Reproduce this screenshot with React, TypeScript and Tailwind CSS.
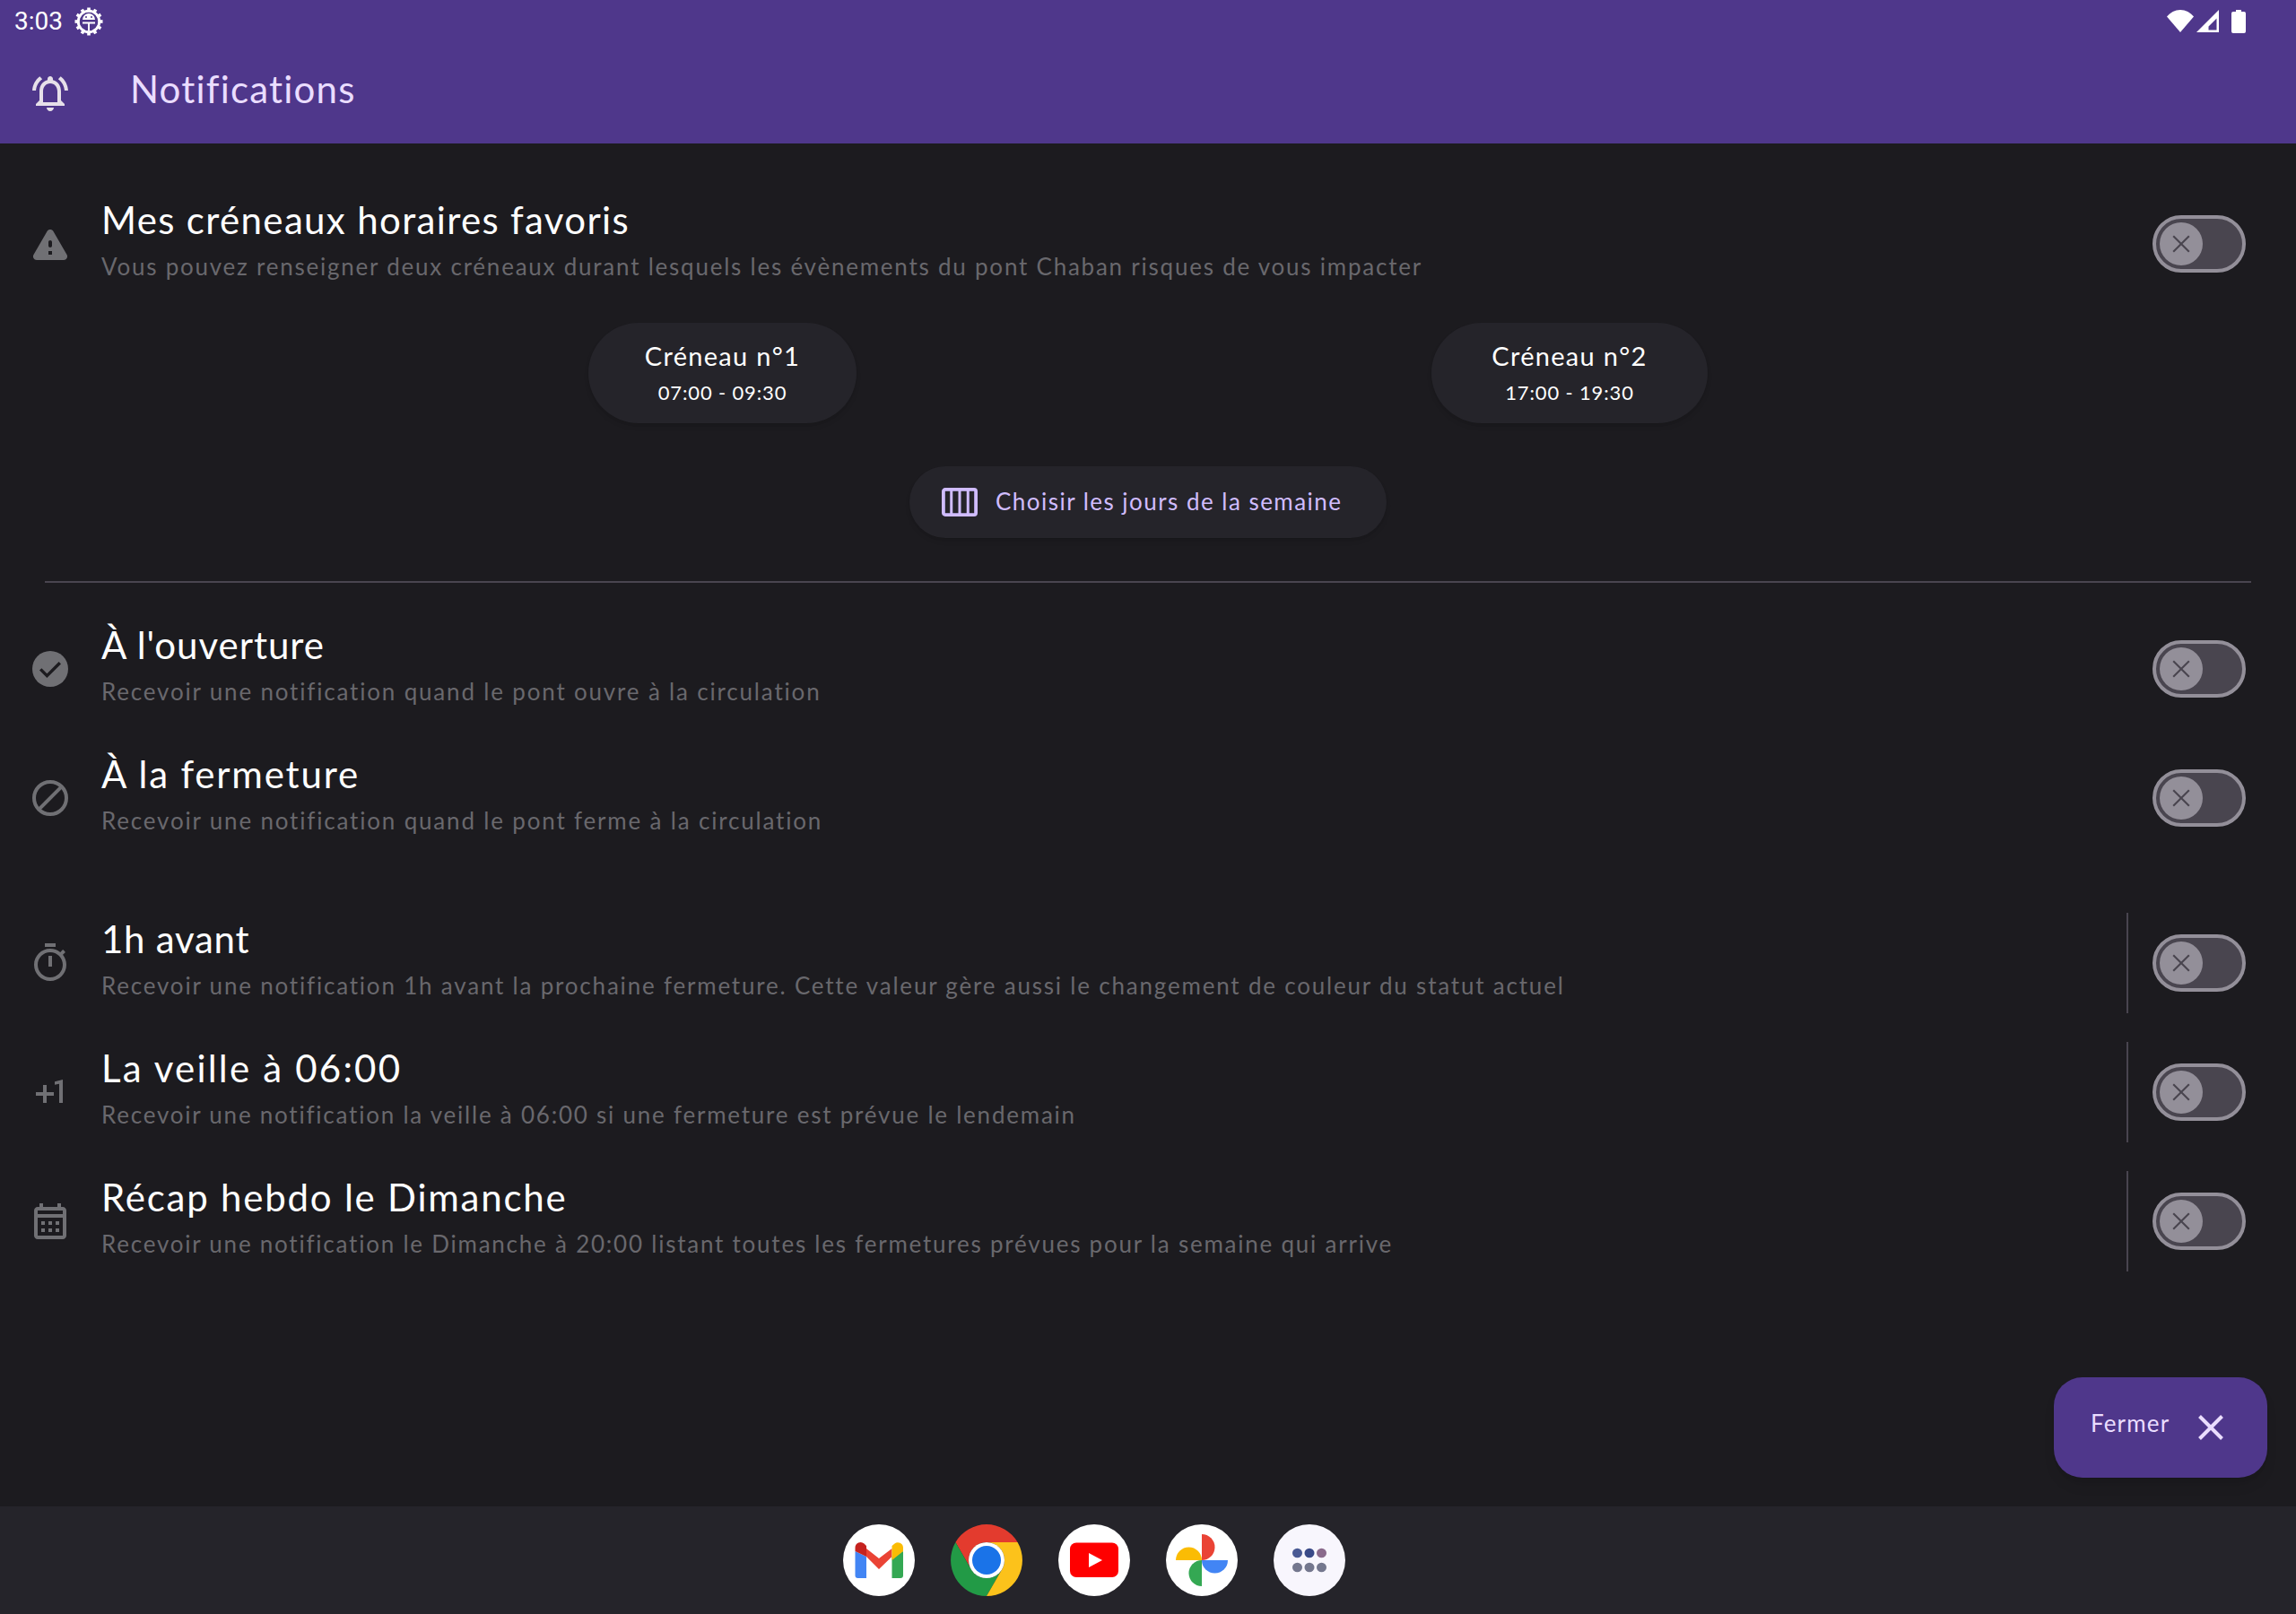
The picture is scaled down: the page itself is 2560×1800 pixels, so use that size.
import React from "react";

const G = "#707074";

function MI({ d, className = "" }: { d: string; className?: string }) {
  return (
    <svg viewBox="0 0 24 24" className={`w-12 h-12 shrink-0 ${className}`} fill="currentColor">
      <path d={d} />
    </svg>
  );
}

const warning = "M4.47 21h15.06c1.54 0 2.5-1.67 1.73-3L13.73 4.99c-.77-1.33-2.69-1.33-3.46 0L2.74 18c-.77 1.33.19 3 1.73 3zM12 14c-.55 0-1-.45-1-1v-2c0-.55.45-1 1-1s1 .45 1 1v2c0 .55-.45 1-1 1zm1 4h-2v-2h2v2z";
const timer = "M9 1h6v2H9zm10.03 6.39l1.42-1.42c-.43-.51-.9-.99-1.41-1.41l-1.42 1.42C16.07 4.74 14.12 4 12 4c-4.97 0-9 4.03-9 9s4.02 9 9 9 9-4.03 9-9c0-2.12-.74-4.07-1.97-5.61zM12 20c-3.87 0-7-3.13-7-7s3.13-7 7-7 7 3.13 7 7-3.13 7-7 7zm-1-12h2v6h-2z";
const plusOne = "M10 8H8v4H4v2h4v4h2v-4h4v-2h-4zm4.5-1.92V7.9l2.5-.5V18h2V5z";
const calendar = "M19 4h-1V2h-2v2H8V2H6v2H5c-1.11 0-1.99.9-1.99 2L3 20c0 1.1.89 2 2 2h14c1.1 0 2-.9 2-2V6c0-1.1-.9-2-2-2zm0 16H5V10h14v10zm0-12H5V6h14v2zM9 14H7v-2h2v2zm4 0h-2v-2h2v2zm4 0h-2v-2h2v2zm-8 4H7v-2h2v2zm4 0h-2v-2h2v2zm4 0h-2v-2h2v2z";
const bell = "M7.58 4.08L6.15 2.65C3.75 4.48 2.17 7.3 2.03 10.5h2c.15-2.65 1.51-4.97 3.55-6.42zm12.39 6.42h2c-.15-3.2-1.73-6.02-4.12-7.85l-1.42 1.43c2.02 1.45 3.39 3.77 3.54 6.42zM18 11c0-3.07-1.63-5.64-4.5-6.32V4c0-.83-.67-1.5-1.5-1.5s-1.5.67-1.5 1.5v.68C7.64 5.36 6 7.92 6 11v5l-2 2v1h16v-1l-2-2v-5zm-2 6H8v-6c0-2.48 1.51-4.5 4-4.5s4 2.02 4 4.5v6zm-4 5c1.1 0 2-.9 2-2h-4c0 1.1.9 2 2 2z";

function CheckIcon() {
  return (
    <svg viewBox="0 0 24 24" className="w-12 h-12 shrink-0">
      <circle cx="12" cy="12" r="10" fill={G} />
      <path d="M6.6 12.2l3.6 3.6 7.2-7.2" fill="none" stroke="#1c1b1f" strokeWidth="1.7" />
    </svg>
  );
}
function BlockIcon() {
  return (
    <svg viewBox="0 0 24 24" className="w-12 h-12 shrink-0" fill="none" stroke={G} strokeWidth="2">
      <circle cx="12" cy="12" r="9" />
      <path d="M5.7 18.3L18.3 5.7" />
    </svg>
  );
}

function Toggle() {
  return (
    <div className="w-[104px] h-16 rounded-full border-4 border-[#938f99] bg-[#49454f] flex items-center pl-1 shrink-0">
      <div className="w-12 h-12 rounded-full bg-[#938f99] flex items-center justify-center">
        <svg viewBox="0 0 20 20" className="w-5 h-5" stroke="#49454f" strokeWidth="2.1" fill="none">
          <path d="M1.2 1.2l17.6 17.6M18.8 1.2L1.2 18.8" />
        </svg>
      </div>
    </div>
  );
}

function Row({
  icon,
  title,
  sub,
  divider,
  titleTrack = "tracking-[1.35px]",
  subTrack = "tracking-[1.77px]",
}: {
  icon: React.ReactNode;
  title: string;
  sub: string;
  divider?: boolean;
  titleTrack?: string;
  subTrack?: string;
}) {
  return (
    <div className="h-36 flex items-center pl-8 pr-14">
      <div className="w-12 h-12 flex items-center justify-center text-[#707074] shrink-0">{icon}</div>
      <div className="flex-1 pl-[33px] flex flex-col -mt-[12px]">
        <div className={`text-[42px] leading-[50px] text-white whitespace-nowrap ${titleTrack}`}>{title}</div>
        <div className={`text-[26px] leading-[32px] text-[#69686d] whitespace-nowrap mt-[11px] ${subTrack}`}>{sub}</div>
      </div>
      {divider && <div className="w-[2px] h-28 bg-[#49454f] mr-[27px] shrink-0" />}
      <Toggle />
    </div>
  );
}

function Chip({ title, time, w }: { title: string; time: string; w: string }) {
  return (
    <div className={`h-28 ${w} rounded-full bg-[#25242a] shadow-md flex flex-col items-center justify-center`}>
      <div className="text-[29px] leading-[38px] text-white tracking-[1.3px] -mt-[2px]">{title}</div>
      <div className="text-[22px] leading-[30px] text-white mt-[7px] tracking-[0.85px]">{time}</div>
    </div>
  );
}

function Gmail() {
  return (
    <svg viewBox="0 0 80 80" className="w-20 h-20 rounded-full bg-white">
      <path d="M13.5 30v27a3 3 0 0 0 3 3H26V36z" fill="#4285f4" />
      <path d="M54.5 36v24H64a3 3 0 0 0 3-3V30z" fill="#34a853" />
      <path d="M26 27L40 38 54.5 27V36L40 50 26 36z" fill="#ea4335" />
      <path d="M13.5 26a6 6 0 0 1 10-4.5L26 24v12L13.5 30z" fill="#c5221f" />
      <path d="M54.5 24l3-2.6A6 6 0 0 1 67 26v4L54.5 40z" fill="#fbbc04" />
    </svg>
  );
}
function Chrome() {
  return (
    <svg viewBox="0 0 80 80" className="w-20 h-20">
      <path d="M5.4 20A40 40 0 0 1 74.6 20L40 20A20 20 0 0 0 22.7 50Z" fill="#e33b2e" />
      <path d="M5.4 20A40 40 0 0 0 40 80L57.3 50A20 20 0 0 1 22.7 50Z" fill="#229a46" />
      <path d="M74.6 20A40 40 0 0 1 40 80L57.3 50A20 20 0 0 0 40 20Z" fill="#fcc21b" />
      <circle cx="40" cy="40" r="20" fill="#fff" />
      <circle cx="40" cy="40" r="16" fill="#1a73e8" />
    </svg>
  );
}
function YouTube() {
  return (
    <svg viewBox="0 0 80 80" className="w-20 h-20 rounded-full bg-white">
      <rect x="13" y="20.5" width="54" height="38.5" rx="7" fill="#ff0000" />
      <path d="M34 32l15 8-15 8z" fill="#fff" />
    </svg>
  );
}
function Photos() {
  return (
    <svg viewBox="0 0 80 80" className="w-20 h-20 rounded-full bg-white">
      <path d="M11 40a14.5 14.5 0 0 1 29 0z" fill="#fbbc04" />
      <path d="M40 11a14.5 14.5 0 0 1 0 29z" fill="#ea4335" />
      <path d="M69 40a14.5 14.5 0 0 1-29 0z" fill="#4285f4" />
      <path d="M40 69a14.5 14.5 0 0 1 0-29z" fill="#34a853" />
    </svg>
  );
}
function Apps() {
  return (
    <svg viewBox="0 0 80 80" className="w-20 h-20 rounded-full bg-[#f8f6fd]">
      <ellipse cx="26.5" cy="32" rx="5.5" ry="5.2" fill="#4a5a94" />
      <ellipse cx="40" cy="32" rx="5.5" ry="5.2" fill="#3a4a88" />
      <ellipse cx="53.5" cy="32" rx="5.5" ry="5.2" fill="#8a6a8c" />
      <ellipse cx="26.5" cy="48" rx="5.5" ry="5.2" fill="#74778e" />
      <ellipse cx="40" cy="48" rx="5.5" ry="5.2" fill="#74778e" />
      <ellipse cx="53.5" cy="48" rx="5.5" ry="5.2" fill="#74778e" />
    </svg>
  );
}

function DebugGear() {
  const teeth = Array.from({ length: 12 }, (_, i) => i * 30);
  return (
    <svg viewBox="0 0 32 32" className="w-8 h-8 ml-[13px]">
      {teeth.map((a) => (
        <rect key={a} x="14.2" y="0.5" width="3.6" height="5" fill="#fff" transform={`rotate(${a} 16 16)`} />
      ))}
      <circle cx="16" cy="16" r="11.8" fill="none" stroke="#fff" strokeWidth="2.8" />
      <path d="M9 14a7 7 0 0 1 14 0z" fill="#fff" />
      <circle cx="13" cy="11" r="1" fill="#4f378b" />
      <circle cx="19" cy="11" r="1" fill="#4f378b" />
      <path d="M9 16.5h14v2h-6v8h-2v-8H9z" fill="#fff" />
    </svg>
  );
}

export default function App() {
  return (
    <div className="w-[2560px] h-[1800px] flex flex-col bg-[#1c1b1f] overflow-hidden font-['Lato',sans-serif]">
      <header className="h-40 bg-[#4f378b] flex flex-col shrink-0">
        <div className="h-12 flex items-center pl-4 pr-14 font-['Roboto',sans-serif] text-white">
          <span className="text-[28px] leading-none">3:03</span>
          <DebugGear />
          <div className="flex-1" />
          <svg viewBox="0 0 30 25" className="w-[30px] h-[25px] mb-[1px]" fill="#fff">
            <path d="M0 7.5C3.8 3 9 0 15 0s11.2 3 15 7.5L15 25z" />
          </svg>
          <svg viewBox="0 0 25 25" className="w-[25px] h-[25px] ml-[3px] mb-[1px]">
            <path fillRule="evenodd" d="M0 25L25 0v25zM13.5 22.5h9V9.5l-9 9z" fill="#fff" />
          </svg>
          <svg viewBox="0 0 16 26" className="w-4 h-[26px] ml-[14px] mb-[1px]" fill="#fff">
            <path d="M5 0h6v2h3a2 2 0 0 1 2 2v20a2 2 0 0 1-2 2H2a2 2 0 0 1-2-2V4a2 2 0 0 1 2-2h3z" />
          </svg>
        </div>
        <div className="flex-1 flex items-center pl-8">
          <MI d={bell} className="text-[#e6e0e9]" />
          <h1 className="ml-[65px] -mt-[10px] text-[42px] leading-[50px] text-[#eaddff] tracking-[1.2px] font-normal">Notifications</h1>
        </div>
      </header>

      <main className="relative flex-1 pt-10">
        <Row
          icon={<MI d={warning} />}
          title="Mes créneaux horaires favoris"
          sub="Vous pouvez renseigner deux créneaux durant lesquels les évènements du pont Chaban risques de vous impacter"
        />
        <div className="mt-4 w-[1889px] mx-auto flex justify-around">
          <Chip title="Créneau n°1" time="07:00 - 09:30" w="w-[299px]" />
          <Chip title="Créneau n°2" time="17:00 - 19:30" w="w-[308px]" />
        </div>
        <div className="mt-12 flex justify-center">
          <div className="h-20 w-[532px] rounded-full bg-[#25242a] shadow-md flex items-center pl-9 text-[#d0bcff]">
            <svg viewBox="0 0 40 32" className="w-10 h-8 shrink-0" fill="none" stroke="#d0bcff" strokeWidth="3.8">
              <rect x="1.9" y="1.9" width="36.2" height="28.2" rx="2" />
              <path d="M10.75 2v28M20 2v28M29.25 2v28" strokeWidth="3" />
            </svg>
            <span className="ml-5 -mt-[2px] text-[26px] tracking-[1.47px] whitespace-nowrap">Choisir les jours de la semaine</span>
          </div>
        </div>
        <div className="mt-12 mx-[50px] h-[2px] bg-[#49454f]" />
        <div className="mt-6">
          <Row icon={<CheckIcon />} title="À l'ouverture" titleTrack="tracking-[0.97px]" subTrack="tracking-[1.82px]" sub="Recevoir une notification quand le pont ouvre à la circulation" />
          <Row icon={<BlockIcon />} title="À la fermeture" titleTrack="tracking-[1.82px]" subTrack="tracking-[1.82px]" sub="Recevoir une notification quand le pont ferme à la circulation" />
        </div>
        <div className="mt-10">
          <Row divider icon={<MI d={timer} />} title="1h avant" titleTrack="tracking-[0.75px]" subTrack="tracking-[1.8px]" sub="Recevoir une notification 1h avant la prochaine fermeture. Cette valeur gère aussi le changement de couleur du statut actuel" />
          <Row divider icon={<MI d={plusOne} />} title="La veille à 06:00" titleTrack="tracking-[2.2px]" sub="Recevoir une notification la veille à 06:00 si une fermeture est prévue le lendemain" />
          <Row divider icon={<MI d={calendar} />} title="Récap hebdo le Dimanche" titleTrack="tracking-[1.78px]" sub="Recevoir une notification le Dimanche à 20:00 listant toutes les fermetures prévues pour la semaine qui arrive" />
        </div>

        <button className="absolute right-8 bottom-8 w-[238px] h-28 rounded-[32px] bg-[#4f378b] shadow-lg flex items-center pl-[41px] text-[#eaddff]">
          <span className="text-[26px] tracking-[1.15px] -mt-[10px]">Fermer</span>
          <svg viewBox="0 0 28 28" className="w-7 h-7 ml-[32px]" stroke="#eaddff" strokeWidth="4" fill="none">
            <path d="M1.5 1.5l25 25M26.5 1.5l-25 25" />
          </svg>
        </button>
      </main>

      <footer className="h-[120px] shrink-0 bg-[#25242a] flex items-center justify-center gap-10 pr-[120px]">
        <Gmail />
        <Chrome />
        <YouTube />
        <Photos />
        <Apps />
      </footer>
    </div>
  );
}
